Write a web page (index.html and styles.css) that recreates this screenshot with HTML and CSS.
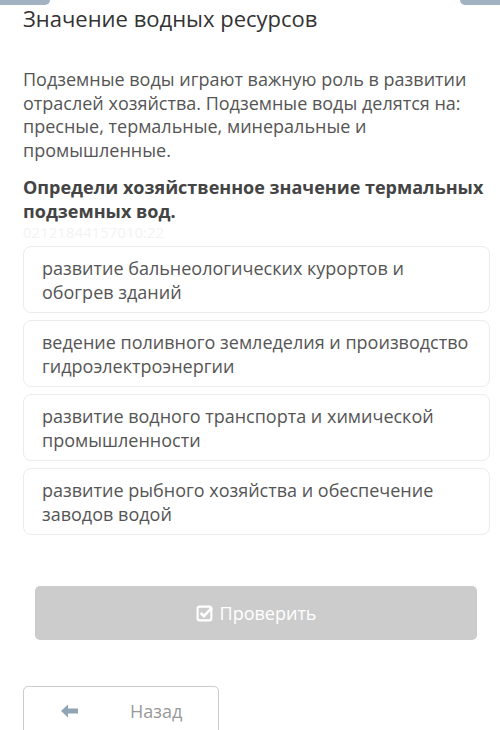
FILE: index.html
```html
<!DOCTYPE html>
<html lang="ru">

<head>
    <meta charset="UTF-8">
    <meta name="viewport" content="width=device-width, initial-scale=1.0">
    <title>Значение водных ресурсов</title>
    <link rel="stylesheet" href="styles.css">
</head>

<body>
    <div class="topbar">
        <span class="tab tab-left"></span>
        <span class="tab tab-right"></span>
    </div>

    <div class="page">
        <h1 class="title">Значение водных ресурсов</h1>

        <p class="intro">Подземные воды играют важную роль в развитии отраслей хозяйства. Подземные воды делятся на: пресные, термальные, минеральные и промышленные.</p>

        <p class="question">Определи хозяйственное значение термальных подземных вод.</p>
        <div class="stamp">02121844157010:22</div>

        <div class="options">
            <div class="option">развитие бальнеологических курортов и обогрев зданий</div>
            <div class="option">ведение поливного земледелия и производство гидроэлектроэнергии</div>
            <div class="option">развитие водного транспорта и химической промышленности</div>
            <div class="option">развитие рыбного хозяйства и обеспечение заводов водой</div>
        </div>

        <div class="check-wrap">
            <button class="check" disabled>
                <svg width="18" height="18" viewBox="0 0 17 17">
                    <rect x="1.5" y="2.5" width="13" height="13" rx="2" fill="none" stroke="#fff" stroke-width="2" />
                    <path d="M4.5 8.5 L7.5 11.5 L15 3.5" fill="none" stroke="#fff" stroke-width="2.4" />
                </svg>
                Проверить
            </button>
        </div>

        <div class="nav">
            <button class="back">
                <svg width="20" height="16" viewBox="0 0 20 16">
                    <path d="M1 8 L8 1.5 L8 5.5 L18 5.5 L18 10.5 L8 10.5 L8 14.5 Z" fill="#8fa4b4" />
                </svg>
                <span>Назад</span>
            </button>
        </div>
    </div>
</body>

</html>
```

FILE: styles.css
```css
body {
    margin: 0;
    background-color: #ffffff;
    font-family: "Open Sans", "Noto Sans", sans-serif;
    color: #444444;
}

.topbar {
    height: 5px;
    display: flex;
    justify-content: space-between;
}

.tab {
    display: block;
    width: 50px;
    height: 5px;
    background-color: #a3b2c2;
}

.tab-left {
    border-bottom-right-radius: 5px;
}

.tab-right {
    width: 40px;
    border-bottom-left-radius: 5px;
}

.page {
    padding: 0 10px 0 23px;
}

.title {
    margin: 0;
    font-size: 22px;
    font-weight: normal;
    line-height: 27px;
    color: #333333;
}

.intro {
    margin: 36px 0 0;
    font-size: 18px;
    line-height: 23.5px;
    color: #555555;
}

.question {
    margin: 13px 0 0;
    font-size: 18px;
    font-weight: bold;
    line-height: 24px;
    color: #444444;
}

.stamp {
    font-size: 15px;
    line-height: 16px;
    color: #f3f3f3;
    margin-top: 1px;
}

.options {
    display: flex;
    flex-direction: column;
    gap: 7px;
    margin-top: 6px;
}

.option {
    border: 1px solid #ececec;
    border-radius: 8px;
    padding: 9px 18px 8px;
    font-size: 18px;
    line-height: 24px;
    color: #555555;
}

.check-wrap {
    padding: 0 13px 0 12px;
    margin-top: 51px;
}

.check {
    width: 100%;
    height: 54px;
    border: none;
    border-radius: 5px;
    background-color: #cccccc;
    color: #ffffff;
    font-family: "Open Sans", "Noto Sans", sans-serif;
    font-size: 18px;
    display: flex;
    align-items: center;
    justify-content: center;
    gap: 6px;
}

.nav {
    margin-top: 46px;
}

.back {
    width: 196px;
    height: 50px;
    background-color: #ffffff;
    border: 1px solid #cccccc;
    border-radius: 5px;
    display: flex;
    align-items: center;
    padding: 0 0 0 36px;
    font-family: "Open Sans", "Noto Sans", sans-serif;
    font-size: 18px;
    color: #999999;
}

.back span {
    margin-left: 50px;
}
```
